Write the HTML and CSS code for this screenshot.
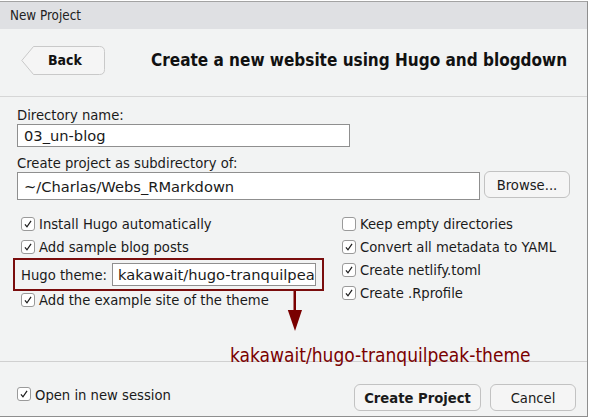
FILE: index.html
```html
<!DOCTYPE html>
<html>
<head>
<meta charset="utf-8">
<link rel="stylesheet" href="styles.css">
</head>
<body>
<div class="window">
  <div class="titlebar">New Project</div>
  <div class="header">
    <div class="back">
      <svg class="back-shape" width="84" height="29" viewBox="0 0 84 29"><path d="M12.5 0.5 H78.5 Q83.5 0.5 83.5 5.5 V23.5 Q83.5 28.5 78.5 28.5 H12.5 L0.8 14.5 Z" fill="#f5f5f5" stroke="#c9c9c9"/></svg>
      <span class="back-label">Back</span>
    </div>
    <div class="heading">Create a new website using Hugo and blogdown</div>
  </div>
  <div class="main">
    <div class="label first">Directory name:</div>
    <input class="input input-name" type="text" value="03_un-blog" readonly>
    <div class="label second">Create project as subdirectory of:</div>
    <div class="dir-row">
      <input class="input input-dir" type="text" value="~/Charlas/Webs_RMarkdown" readonly>
      <div class="btn browse">Browse...</div>
    </div>
    <div class="options">
      <div class="col col-left">
        <div class="opt"><span class="cb checked"><svg viewBox="0 0 13 13"><path d="M3.2 6.8 L5.4 9.6 L9.8 3.2" /></svg></span>Install Hugo automatically</div>
        <div class="opt"><span class="cb checked"><svg viewBox="0 0 13 13"><path d="M3.2 6.8 L5.4 9.6 L9.8 3.2" /></svg></span>Add sample blog posts</div>
        <div class="theme-box">
          <span class="theme-label">Hugo theme:</span>
          <input class="input input-theme" type="text" value="kakawait/hugo-tranquilpeak-theme" readonly>
        </div>
        <div class="opt short"><span class="cb checked"><svg viewBox="0 0 13 13"><path d="M3.2 6.8 L5.4 9.6 L9.8 3.2" /></svg></span>Add the example site of the theme</div>
      </div>
      <div class="col col-right">
        <div class="opt"><span class="cb"></span>Keep empty directories</div>
        <div class="opt"><span class="cb checked"><svg viewBox="0 0 13 13"><path d="M3.2 6.8 L5.4 9.6 L9.8 3.2" /></svg></span>Convert all metadata to YAML</div>
        <div class="opt"><span class="cb checked"><svg viewBox="0 0 13 13"><path d="M3.2 6.8 L5.4 9.6 L9.8 3.2" /></svg></span>Create netlify.toml</div>
        <div class="opt"><span class="cb checked"><svg viewBox="0 0 13 13"><path d="M3.2 6.8 L5.4 9.6 L9.8 3.2" /></svg></span>Create .Rprofile</div>
      </div>
    </div>
  </div>
  <div class="footer">
    <div class="opt session"><span class="cb checked"><svg viewBox="0 0 13 13"><path d="M3.2 6.8 L5.4 9.6 L9.8 3.2" /></svg></span>Open in new session</div>
    <div class="btn create">Create Project</div>
    <div class="btn cancel">Cancel</div>
  </div>
  <svg class="arrow" width="16" height="42" viewBox="0 0 16 42"><rect x="6.5" y="0" width="2.5" height="20" fill="#7a0000"/><path d="M0.8 19 H15 L8 40 Z" fill="#7a0000"/></svg>
  <div class="annotation">kakawait/hugo-tranquilpeak-theme</div>
</div>
</body>
</html>
```
FILE: styles.css
```css
html, body {
  margin: 0;
  padding: 0;
  background: #ffffff;
}
body {
  font-family: "DejaVu Sans Condensed", "DejaVu Sans", sans-serif;
  font-stretch: condensed;
  color: #1a1a1a;
  width: 590px;
  height: 418px;
  overflow: hidden;
}
.window {
  position: relative;
  box-sizing: border-box;
  width: 588px;
  height: 416px;
  margin-top: 1px;
  border-top: 1px solid #a3a3a3;
  border-right: 1px solid #8e8e8e;
  border-bottom: 1px solid #8e8e8e;
  background: #f2f3f3;
  display: flex;
  flex-direction: column;
}
.titlebar {
  height: 27px;
  background: #dfe0e3;
  font-size: 10pt;
  line-height: 27px;
  padding-left: 10px;
  color: #222;
}
.header {
  box-sizing: border-box;
  height: 68px;
  border-bottom: 1px solid #d6d6d6;
  display: flex;
  align-items: center;
  padding-left: 21px;
  padding-bottom: 5px;
}
.back {
  display: grid;
  width: 84px;
  height: 29px;
}
.back-shape, .back-label {
  grid-area: 1 / 1;
}
.back-label {
  font-weight: bold;
  font-size: 14px;
  line-height: 29px;
  padding-left: 27px;
  color: #111;
}
.heading {
  margin-left: 46px;
  font-weight: bold;
  font-size: 17px;
  color: #111;
}
.main {
  flex: 1;
  padding: 0 17px;
  font-size: 11pt;
}
.label {
  height: 17px;
  line-height: 17px;
}
.label.first { margin-top: 9px; }
.label.second { margin-top: 7px; }
.input {
  display: block;
  box-sizing: border-box;
  margin: 0;
  background: #fff;
  border: 1px solid #8f8f8f;
  border-radius: 0;
  outline: none;
  font-family: "DejaVu Sans", sans-serif;
  font-stretch: normal;
  font-size: 11pt;
  color: #1a1a1a;
  padding: 0 0 0 6px;
}
.input-name {
  margin-top: 1px;
  width: 333px;
  height: 23px;
}
.dir-row {
  display: flex;
  align-items: flex-start;
  gap: 4px;
}
.input-dir {
  margin-top: 1px;
  width: 463px;
  height: 28px;
}
.btn {
  box-sizing: border-box;
  background: #f5f5f5;
  border: 1px solid #c2c2c2;
  border-radius: 6px;
  text-align: center;
  font-size: 11pt;
  color: #1a1a1a;
}
.browse {
  width: 86px;
  height: 27px;
  line-height: 25px;
}
.options {
  display: flex;
  margin-top: 12px;
}
.col-left {
  width: 321px;
  padding-left: 4px;
}
.opt {
  display: flex;
  align-items: center;
  height: 23px;
  white-space: nowrap;
}
.opt.short {
  height: 17px;
}
.cb {
  box-sizing: border-box;
  width: 14px;
  height: 14px;
  border: 1px solid #9a9a9a;
  border-radius: 3px;
  background: #fff;
  margin-right: 4px;
  display: flex;
}
.cb svg {
  width: 12px;
  height: 12px;
}
.cb svg path {
  fill: none;
  stroke: #1a1a1a;
  stroke-width: 1.3;
}
.theme-box {
  box-sizing: border-box;
  margin-left: -8px;
  width: 311px;
  height: 33px;
  border: 2px solid #7a0d0d;
  display: flex;
  align-items: center;
  padding-left: 6px;
}
.theme-label {
  width: 91px;
}
.input-theme {
  width: 204px;
  height: 23px;
  padding-left: 5px;
}
.footer {
  height: 55px;
  border-top: 1px solid #d0d0d0;
  box-sizing: border-box;
  display: flex;
  align-items: flex-start;
  padding-left: 17px;
  font-size: 11pt;
}
.session {
  margin-top: 20px;
  height: 24px;
  flex: 1;
}
.create {
  margin-top: 22px;
  width: 127px;
  height: 27px;
  line-height: 25px;
  font-weight: bold;
}
.cancel {
  margin-top: 22px;
  margin-left: 9px;
  width: 86px;
  height: 27px;
  line-height: 25px;
  margin-right: 11px;
}
.arrow {
  position: absolute;
  left: 287px;
  top: 289px;
}
.annotation {
  position: absolute;
  left: 230px;
  top: 341px;
  font-size: 19px;
  line-height: 24px;
  color: #7a0000;
  white-space: nowrap;
}
```
